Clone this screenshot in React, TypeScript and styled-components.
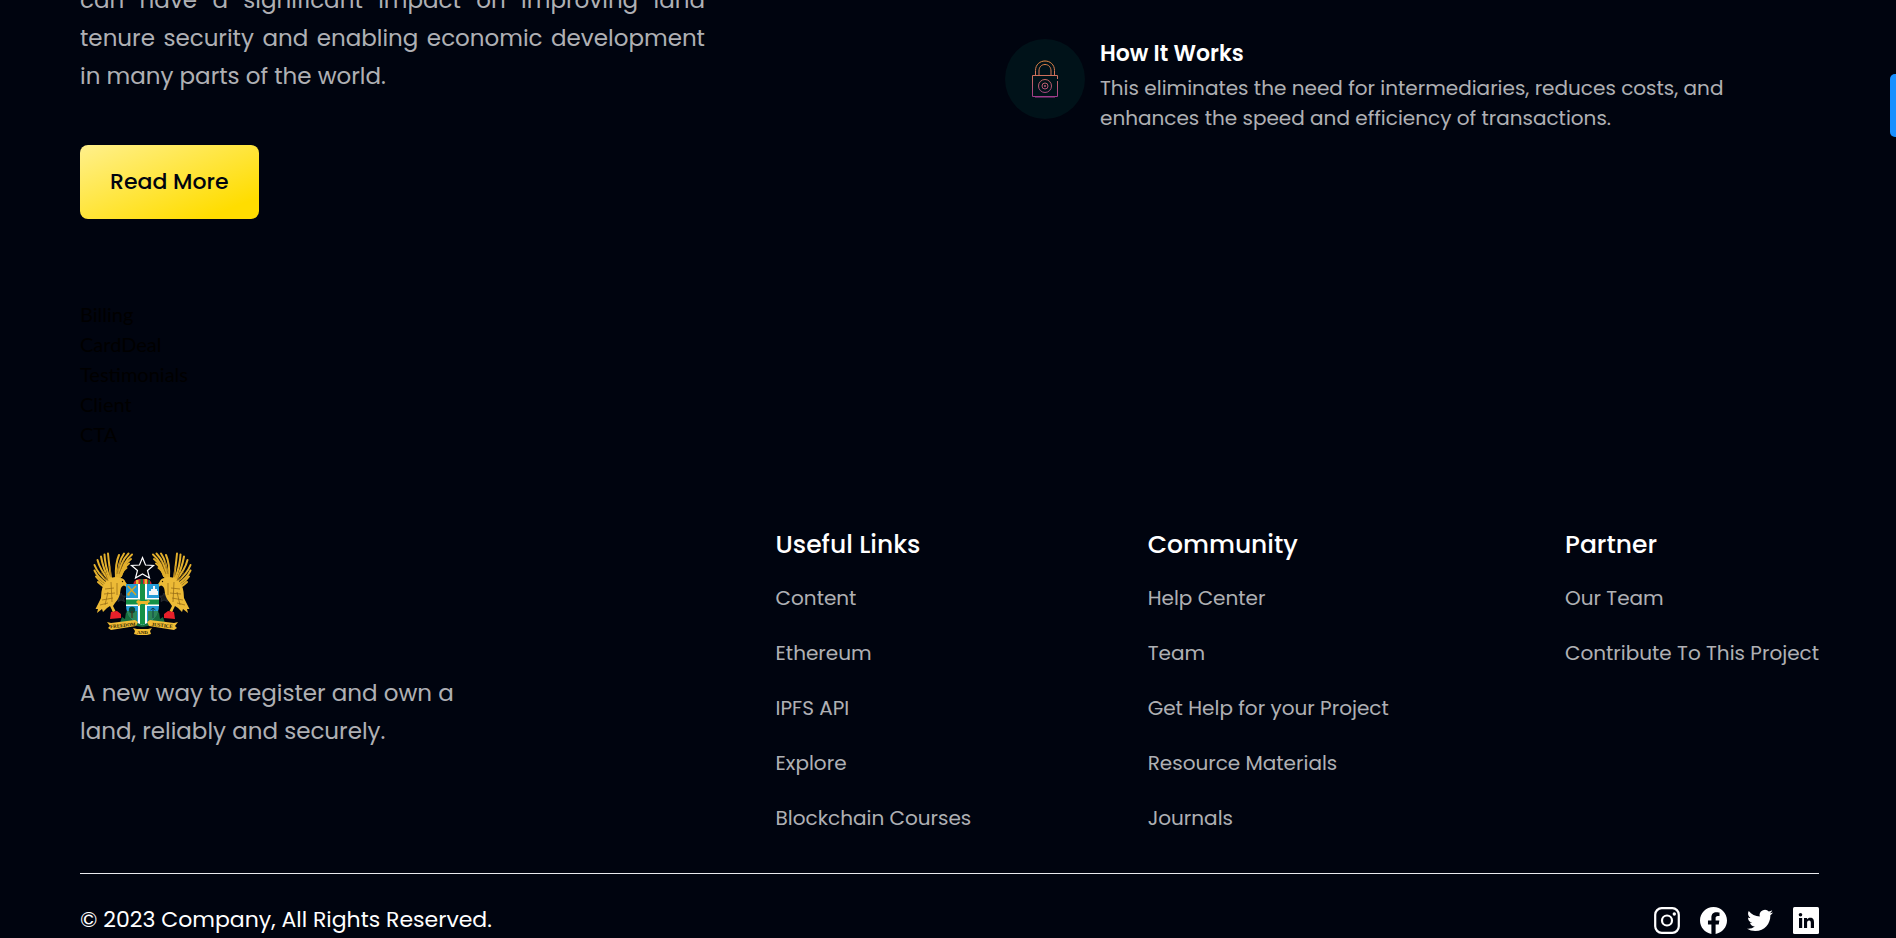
import React from 'react';
import styled, { createGlobalStyle } from 'styled-components';

const Global = createGlobalStyle`
  *, *::before, *::after { box-sizing: border-box; }
  body {
    margin: 0;
    background: #00040f;
    font-family: Poppins, Inter, sans-serif;
    overflow-x: hidden;
  }
  h2, h3, p, ul { margin: 0; padding: 0; font-weight: 400; }
  ul { list-style: none; }
  a { color: inherit; text-decoration: none; }
`;

const Page = styled.div`
  padding: 0 77px 0 80px;
`;

const Business = styled.section`
  display: flex;
  align-items: flex-start;
`;

const Intro = styled.div`
  flex: 1;
  margin-top: -19px;
`;

const Lead = styled.p<{ $justify?: boolean; $width: number }>`
  max-width: ${(p) => p.$width}px;
  color: rgba(255, 255, 255, 0.7);
  font-size: 23px;
  line-height: 38px;
  text-align: ${(p) => (p.$justify ? 'justify' : 'left')};
`;

const ReadMore = styled.button`
  margin-top: 50px;
  padding: 20px 30px;
  border: 0;
  border-radius: 8px;
  background: linear-gradient(158deg, #fff08c 0%, #ffdd00 85%);
  color: #00040f;
  font: 500 22px/34px Poppins, Inter, sans-serif;
  cursor: pointer;
`;

const Feature = styled.article`
  flex: 1;
  display: flex;
  align-items: flex-start;
  gap: 15px;
  margin-top: 39px;
  padding-left: 111px;
`;

const Badge = styled.div`
  display: flex;
  flex: none;
  align-items: center;
  justify-content: center;
  width: 80px;
  height: 80px;
  border-radius: 50%;
  background: #001219;
`;

const FeatureTitle = styled.h3`
  color: #fff;
  font-size: 22px;
  font-weight: 600;
  line-height: 30px;
  margin-bottom: 4px;
`;

const FeatureText = styled.p`
  max-width: 640px;
  color: rgba(255, 255, 255, 0.7);
  font-size: 20px;
  line-height: 30px;
`;

const Placeholders = styled.div`
  margin-top: 80px;
  color: #000;
  font: 20px/30px Lato, sans-serif;
`;

const FooterTop = styled.div`
  display: flex;
  margin-top: 79px;
`;

const Brand = styled.div`
  flex: 1;
  display: flex;
  flex-direction: column;
  gap: 31px;
  padding-top: 15px;
`;

const Columns = styled.nav`
  flex: 1.5;
  display: flex;
  justify-content: space-between;
`;

const ColumnTitle = styled.h2`
  color: #fff;
  font-size: 25px;
  font-weight: 500;
  line-height: 34px;
`;

const Links = styled.ul`
  display: flex;
  flex-direction: column;
  gap: 25px;
  margin-top: 21px;
  color: rgba(255, 255, 255, 0.7);
  font-size: 20px;
  line-height: 30px;
`;

const FooterBottom = styled.div`
  display: flex;
  align-items: center;
  justify-content: space-between;
  margin-top: 40px;
  padding-top: 29px;
  border-top: 1px solid #e9eaee;
`;

const Copyright = styled.p`
  color: #fff;
  font-size: 22px;
  line-height: 34px;
`;

const Socials = styled.div`
  display: flex;
  gap: 20px;
  color: #fff;
  a, svg { display: block; }
`;

const SideTab = styled.button`
  position: fixed;
  top: 74px;
  right: 0;
  width: 6px;
  height: 63px;
  padding: 0;
  border: 0;
  border-radius: 5px 0 0 5px;
  background: #1890ff;
`;

const LockIcon = () => (
  <svg width="40" height="40" viewBox="0 0 40 40" fill="none" aria-hidden="true">
    <defs>
      <linearGradient id="lock" x1="0" y1="0" x2="0" y2="40" gradientUnits="userSpaceOnUse">
        <stop offset="0" stopColor="#e88b3e" />
        <stop offset="0.5" stopColor="#c96a62" />
        <stop offset="1" stopColor="#9a3591" />
      </linearGradient>
    </defs>
    <g stroke="url(#lock)" strokeWidth="1">
      <path d="M10.5 16V11.500C10.5 5.500 15 2 20 2S29.500 5.500 29.500 11.500V16" />
      <path d="M14 16V12C14 8 16.500 5.500 20 5.500S26 8 26 12V16" />
      <path d="M32.500 20V16.500H7.500V37.500H32.500V22" />
      <path d="M10 38.500H30" opacity="0.5" />
      <circle cx="20" cy="27" r="6.500" />
      <circle cx="20" cy="27" r="3" />
      <circle cx="20" cy="27" r="0.7" />
    </g>
  </svg>
);

const Eagle = () => (
  <g>
    <g fill="none" stroke="#e3b02c" strokeLinecap="round" strokeWidth="2">
      <path d="M15 1.500Q16 12 18 26" />
      <path d="M11.500 2.500Q12 14 17 27" />
      <path d="M8 4.500Q10 16 16 28" />
      <path d="M4.500 8Q7 18 16 28" />
      <path d="M1.500 13Q5 22 15 30" />
      <path d="M1.500 18.500Q5 26 14 32" />
      <path d="M3 24.500Q7 30 13 34" />
      <path d="M5 30Q8 33 13 36" />
      <path d="M26 3Q22 12 23 26" />
      <path d="M31 1.500Q25 10 24 27" />
      <path d="M35.500 1.500Q27 10 25 27" />
      <path d="M39 2.500Q30 10 26 27" />
      <path d="M38 7Q31 12 27 25" />
      <path d="M36 11.500Q31 15 28 24" />
      <path d="M33.500 16Q30 18 28 24" />
    </g>
    <path
      fill="#ecba36"
      d="M14 28Q21 23 27 26Q31 26 32.500 30L35 33.500L34.500 35.500L31 33.500Q28 34 27.500 38Q27 46 22 51L20 54L22.500 59L20 60L17 54L14 56L10 60L9 57L4 61L5 57L2.500 57L8 46Q8 34 14 28Z"
    />
    <path
      d="M12 20L15 29M8 20L13 29M17 14L18 25M27 9L24 22M31 9L26 22M12 37L21 36M11 42L22 41M9 48L20 46M7 53L15 51M24 31L24 43M15 40L12 53M18 30L19 50"
      stroke="#8f6512"
      strokeWidth="0.7"
      fill="none"
    />
    <path d="M20 58L21 61" stroke="#ecba36" strokeWidth="1.5" />
    <circle cx="29.500" cy="29.500" r="0.7" fill="#241700" />
  </g>
);

const CoatOfArms = () => (
  <svg width="125" height="100" viewBox="0 0 125 100" role="img" aria-label="Coat of arms of Ghana">
    <path d="M41 50l1.500 3h3l-2 2.500 1 3-3.500-1.500-3 1.500 0.500-3-2-2.500h3zM84 50l1.500 3h3l-2 2.500 1 3-3.500-1.500-3 1.500 0.500-3-2-2.500h3z" fill="#14181f" stroke="#3c424c" strokeWidth="0.5" />
    <g transform="translate(13 9)">
      <Eagle />
    </g>
    <g transform="translate(112 9) scale(-1 1)">
      <Eagle />
    </g>
    <path d="M40 80L42 74L45 76L46 69L50 72H75L79 69L80 76L83 74L85 80L62.500 84Z" fill="#176b3d" />
    <path d="M31 69l6-1 4 3v4l-11 1zM94 69l-6-1-4 3v4l11 1z" fill="#e8202a" />
    <path d="M46 41H79V62C79 73 72 79 62.500 82C53 79 46 73 46 62Z" fill="#259bd6" />
    <path d="M46.500 68H57V79Q49 76 46.500 68Z M68 68H78.500Q76 76 68 79Z" fill="#2c8555" />
    <path d="M58 41h9v39l-4.500 2-4.500-2z M46 55h33v8H46z" fill="#fff" />
    <path d="M60 41h5v40l-2.500 1-2.500-1z M46 56.500h33v5H46z" fill="#159147" />
    <path d="M48 43L56 52M56 43L48 51" stroke="#d9a625" strokeWidth="1.500" />
    <circle cx="48.500" cy="51.500" r="1.300" fill="#d9a625" />
    <path d="M69 52V48H71V46H73V43H75V46H77V48H78V52Z" fill="#f4f5f6" />
    <path d="M56 59l2-2 3 1h5l3-1 1 2-2 1v2h-2l-1-1h-4l-2 2h-1l0-2z" fill="#efb52a" />
    <circle cx="52" cy="67" r="3.200" fill="#0d4a38" />
    <path d="M52 68V75" stroke="#493019" strokeWidth="1.200" />
    <path d="M73 65v10M70.500 67l2.500-2 2.500 2" stroke="#123e48" fill="none" />
    <path d="M53.500 40Q55 36.500 59 36H66Q70 36.500 71.500 40V41H53.500Z" fill="#d5202d" />
    <path d="M56 37h2.500v4h-2.500zM64.500 36h2.500v5h-2.500z" fill="#e6b92e" />
    <path d="M60.500 36h2.500v5h-2.500zM68 37h2v4h-2z" fill="#14713a" />
    <path
      d="M62.500 14.500L65.500 22L73.500 22.500L67.500 27.500L69.500 35L62.500 31L55.500 35L57.500 27.500L51.500 22.500L59.500 22Z"
      fill="#05060a"
      stroke="#fff"
      strokeWidth="1.200"
    />
    <path
      d="M27 79L31 80L55 77L58 79L56 83L31 87L28 85L30 83Z M98 79L94 80L70 77L67 79L69 83L94 87L97 85L95 83Z M53 85L57 86H68L72 85L70 88L71 91L67 92H58L54 91L55 88Z"
      fill="#f0bd35"
    />
    <g fill="#2b1c00" fontFamily="Liberation Serif, serif" fontSize="5" fontWeight="700" textAnchor="middle">
      <text x="43" y="84" transform="rotate(-6 43 84)">FREEDOM</text>
      <text x="82" y="84" transform="rotate(6 82 84)">JUSTICE</text>
      <text x="62.500" y="91">AND</text>
    </g>
  </svg>
);

const FacebookIcon = () => (
  <svg width="27" height="27" viewBox="0 0 24 24" fill="currentColor" aria-hidden="true">
    <path d="M24 12.073c0-6.627-5.373-12-12-12s-12 5.373-12 12c0 5.990 4.388 10.954 10.125 11.854v-8.385H7.078v-3.470h3.047V9.430c0-3.007 1.792-4.669 4.533-4.669 1.312 0 2.686.235 2.686.235v2.953H15.830c-1.491 0-1.956.925-1.956 1.874v2.250h3.328l-.532 3.470h-2.796v8.385C19.612 23.027 24 18.062 24 12.073z" />
  </svg>
);

const InstagramIcon = () => (
  <svg width="26" height="27" viewBox="0 0 26 27" fill="none" stroke="currentColor" strokeWidth="2.200" aria-hidden="true">
    <rect x="1.200" y="1.200" width="23.600" height="24.600" rx="6.500" />
    <circle cx="13" cy="13.500" r="5" />
    <circle cx="20.300" cy="7" r="1.700" fill="currentColor" stroke="none" />
  </svg>
);

const TwitterIcon = () => (
  <svg width="26" height="27" viewBox="0 0 24 24" fill="currentColor" aria-hidden="true">
    <path d="M23.953 4.570a10 10 0 01-2.825.775 4.958 4.958 0 002.163-2.723c-.951.555-2.005.959-3.127 1.184a4.920 4.920 0 00-8.384 4.482C7.690 8.095 4.067 6.130 1.640 3.162a4.822 4.822 0 00-.666 2.475c0 1.710.870 3.213 2.188 4.096a4.904 4.904 0 01-2.228-.616v.060a4.923 4.923 0 003.946 4.827 4.996 4.996 0 01-2.212.085 4.936 4.936 0 004.604 3.417 9.867 9.867 0 01-6.102 2.105c-.390 0-.779-.023-1.170-.067a13.995 13.995 0 007.557 2.209c9.053 0 13.998-7.496 13.998-13.985 0-.210 0-.420-.015-.630A9.935 9.935 0 0024 4.590z" />
  </svg>
);

const LinkedinIcon = () => (
  <svg width="26" height="27" viewBox="0 0 26 27" aria-hidden="true">
    <rect width="26" height="27" rx="1.500" fill="currentColor" />
    <g fill="#00040f">
      <circle cx="7.500" cy="7.700" r="1.800" />
      <path d="M6 11h3.200v10H6zM11 11h3v1.500c.7-1.100 1.800-1.700 3.200-1.700 3 0 3.800 1.900 3.800 4.700V21h-3.200v-5c0-1.500-.3-2.500-1.700-2.500-1.500 0-2 1-2 2.500v5H11z" />
    </g>
  </svg>
);

const columns = [
  { title: 'Useful Links', links: ['Content', 'Ethereum', 'IPFS API', 'Explore', 'Blockchain Courses'] },
  { title: 'Community', links: ['Help Center', 'Team', 'Get Help for your Project', 'Resource Materials', 'Journals'] },
  { title: 'Partner', links: ['Our Team', 'Contribute To This Project'] },
];

const socials = [
  { name: 'Instagram', Icon: InstagramIcon },
  { name: 'Facebook', Icon: FacebookIcon },
  { name: 'Twitter', Icon: TwitterIcon },
  { name: 'LinkedIn', Icon: LinkedinIcon },
];

export default function App() {
  return (
    <>
      <Global />
      <Page>
        <Business>
          <Intro>
            <Lead $justify $width={625}>
              can have a significant impact on improving land tenure security and enabling economic development in
              many parts of the world.
            </Lead>
            <ReadMore type="button">Read More</ReadMore>
          </Intro>
          <Feature>
            <Badge>
              <LockIcon />
            </Badge>
            <div>
              <FeatureTitle>How It Works</FeatureTitle>
              <FeatureText>
                This eliminates the need for intermediaries, reduces costs, and enhances the speed and efficiency of
                transactions.
              </FeatureText>
            </div>
          </Feature>
        </Business>
        <Placeholders>
          {['Billing', 'CardDeal', 'Testimonials', 'Client', 'CTA'].map((name) => (
            <div key={name}>{name}</div>
          ))}
        </Placeholders>
        <footer>
          <FooterTop>
            <Brand>
              <CoatOfArms />
              <Lead $width={388}>A new way to register and own a land, reliably and securely.</Lead>
            </Brand>
            <Columns>
              {columns.map(({ title, links }) => (
                <div key={title}>
                  <ColumnTitle>{title}</ColumnTitle>
                  <Links>
                    {links.map((link) => (
                      <li key={link}>
                        <a href="#">{link}</a>
                      </li>
                    ))}
                  </Links>
                </div>
              ))}
            </Columns>
          </FooterTop>
          <FooterBottom>
            <Copyright>© 2023 Company, All Rights Reserved.</Copyright>
            <Socials>
              {socials.map(({ name, Icon }) => (
                <a key={name} href="#" aria-label={name}>
                  <Icon />
                </a>
              ))}
            </Socials>
          </FooterBottom>
        </footer>
      </Page>
      <SideTab type="button" aria-label="Open side panel" />
    </>
  );
}
